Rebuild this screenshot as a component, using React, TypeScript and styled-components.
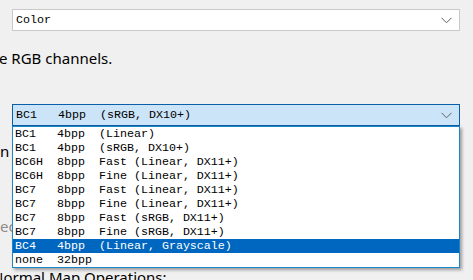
import styled, { createGlobalStyle } from 'styled-components';

interface FormatOption {
  label: string;
  selected?: boolean;
}

const formats: FormatOption[] = [
  { label: 'BC1   4bpp  (Linear)' },
  { label: 'BC1   4bpp  (sRGB, DX10+)' },
  { label: 'BC6H  8bpp  Fast (Linear, DX11+)' },
  { label: 'BC6H  8bpp  Fine (Linear, DX11+)' },
  { label: 'BC7   8bpp  Fast (Linear, DX11+)' },
  { label: 'BC7   8bpp  Fine (Linear, DX11+)' },
  { label: 'BC7   8bpp  Fast (sRGB, DX11+)' },
  { label: 'BC7   8bpp  Fine (sRGB, DX11+)' },
  { label: 'BC4   4bpp  (Linear, Grayscale)', selected: true },
  { label: 'none  32bpp' },
];

const Chevron = () => (
  <svg width="11" height="7" viewBox="0 0 11 7">
    <path d="M0.5 0.8 L5.5 5.8 L10.5 0.8" fill="none" stroke="#5f5f5f" strokeWidth="1" />
  </svg>
);

const App = () => {
  return (
    <>
      <GlobalStyle />
      <Page>
        <ComboBox>
          <span>Color</span>
          <Chevron />
        </ComboBox>

        <Label $top={17} $shift={-1}>
          e RGB channels.
        </Label>

        <ComboBox $active $top={36}>
          <span>BC1   4bpp  (sRGB, DX10+)</span>
          <Chevron />
        </ComboBox>

        <Label $top={15}>n</Label>
        <Label $top={55} $muted>
          ec
        </Label>
        <Label $top={31} $shift={-8}>
          Normal Map Operations:
        </Label>

        <DropList>
          {formats.map((f) => (
            <OptionRow key={f.label} $selected={f.selected}>
              {f.label}
            </OptionRow>
          ))}
        </DropList>
      </Page>
    </>
  );
};

const GlobalStyle = createGlobalStyle`
  html, body {
    margin: 0;
    padding: 0;
    background: #f0f0f0;
  }
`;

const Page = styled.div`
  position: relative;
  width: 473px;
  height: 280px;
  overflow: hidden;
  padding-top: 9px;
  box-sizing: border-box;
  background: #f0f0f0;
`;

const ComboBox = styled.div<{ $active?: boolean; $top?: number }>`
  display: flex;
  align-items: center;
  justify-content: space-between;
  box-sizing: border-box;
  width: 448px;
  height: 22px;
  margin: ${(p) => p.$top || 0}px 0 0 12px;
  padding: 0 7px 0 3px;
  border: 1px solid ${(p) => (p.$active ? '#0a5fa8' : '#c9c9c9')};
  background: ${(p) => (p.$active ? '#cce4f7' : '#ffffff')};
  font-family: 'Liberation Mono', monospace;
  font-size: 11.67px;
  color: #000;
  white-space: pre;

  svg {
    display: block;
  }
`;

const Label = styled.div<{ $top: number; $shift?: number; $muted?: boolean }>`
  margin: ${(p) => p.$top}px 0 0 ${(p) => p.$shift || 0}px;
  height: 20px;
  font-family: 'Noto Sans', sans-serif;
  font-size: 15px;
  line-height: 20px;
  color: ${(p) => (p.$muted ? '#8c8c8c' : '#000')};
  white-space: nowrap;
`;

const DropList = styled.div`
  position: absolute;
  top: 126px;
  left: 12px;
  width: 448px;
  box-sizing: border-box;
  border: 1px solid #1c86c9;
  background: #fff;
  box-shadow: 2px 2px 3px rgba(0, 0, 0, 0.35);
`;

const OptionRow = styled.div<{ $selected?: boolean }>`
  height: 14px;
  padding-left: 2px;
  font-family: 'Liberation Mono', monospace;
  font-size: 11.67px;
  line-height: 14px;
  white-space: pre;
  color: ${(p) => (p.$selected ? '#fff' : '#000')};
  background: ${(p) => (p.$selected ? '#0067c0' : 'transparent')};
`;

export default App;
